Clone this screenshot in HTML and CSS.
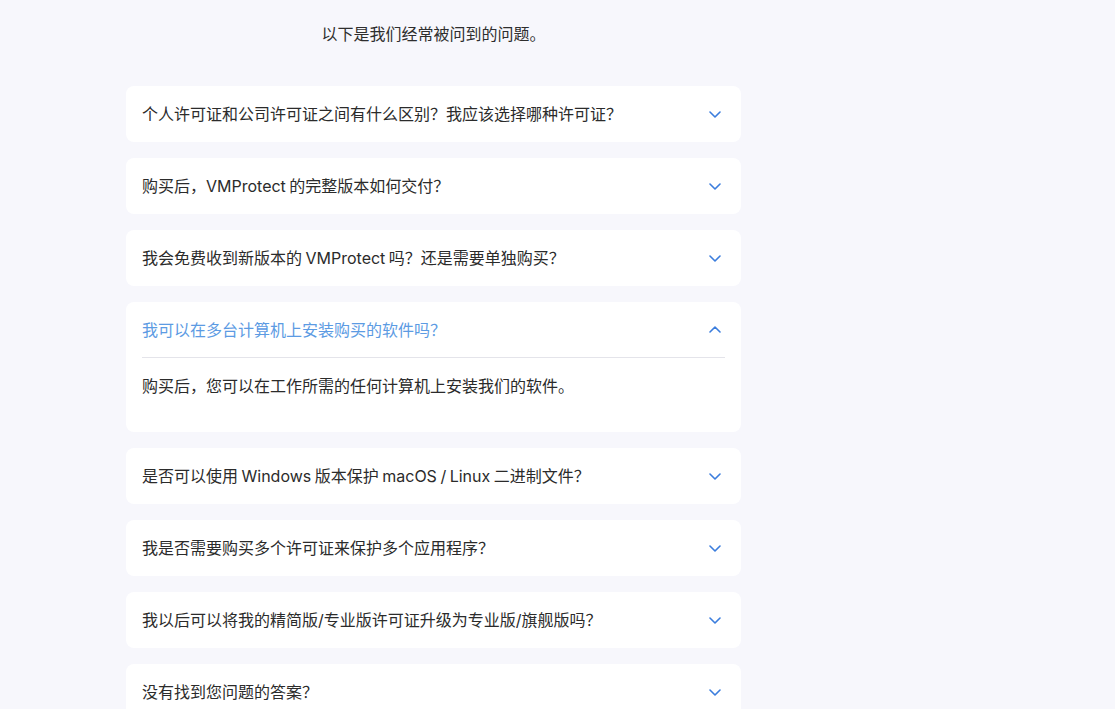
FILE: index.html
```html
<!DOCTYPE html>
<html lang="zh-CN">
<head>
<meta charset="utf-8">
<title>FAQ</title>
<link rel="stylesheet" href="styles.css">
</head>
<body>
<div class="faq">
  <p class="intro">以下是我们经常被问到的问题。</p>
  <div class="list">
    <div class="item">
      <div class="q"><span>个人许可证和公司许可证之间有什么区别？我应该选择哪种许可证？</span><svg class="chev" viewBox="0 0 12 7"><path d="M1 1l5 5 5-5"/></svg></div>
    </div>
    <div class="item">
      <div class="q"><span>购买后，VMProtect 的完整版本如何交付？</span><svg class="chev" viewBox="0 0 12 7"><path d="M1 1l5 5 5-5"/></svg></div>
    </div>
    <div class="item">
      <div class="q"><span>我会免费收到新版本的 VMProtect 吗？还是需要单独购买？</span><svg class="chev" viewBox="0 0 12 7"><path d="M1 1l5 5 5-5"/></svg></div>
    </div>
    <div class="item open">
      <div class="q"><span>我可以在多台计算机上安装购买的软件吗？</span><svg class="chev" viewBox="0 0 12 7"><path d="M1 6l5-5 5 5"/></svg></div>
      <div class="a">购买后，您可以在工作所需的任何计算机上安装我们的软件。</div>
    </div>
    <div class="item">
      <div class="q"><span>是否可以使用 Windows 版本保护 macOS / Linux 二进制文件？</span><svg class="chev" viewBox="0 0 12 7"><path d="M1 1l5 5 5-5"/></svg></div>
    </div>
    <div class="item">
      <div class="q"><span>我是否需要购买多个许可证来保护多个应用程序？</span><svg class="chev" viewBox="0 0 12 7"><path d="M1 1l5 5 5-5"/></svg></div>
    </div>
    <div class="item">
      <div class="q"><span>我以后可以将我的精简版/专业版许可证升级为专业版/旗舰版吗？</span><svg class="chev" viewBox="0 0 12 7"><path d="M1 1l5 5 5-5"/></svg></div>
    </div>
    <div class="item">
      <div class="q"><span>没有找到您问题的答案？</span><svg class="chev" viewBox="0 0 12 7"><path d="M1 1l5 5 5-5"/></svg></div>
    </div>
  </div>
</div>
</body>
</html>
```

FILE: styles.css
```css
* { box-sizing: border-box; }
html, body { margin: 0; padding: 0; }
body {
  background: #f7f7fc;
  font-family: Inter, "Noto Sans CJK SC", sans-serif;
  color: #2b2b2b;
  font-size: 16px;
}
.faq {
  width: 615px;
  margin-left: 126px;
  padding-top: 22px;
}
.intro {
  margin: 0 0 40px;
  text-align: center;
  line-height: 24px;
  color: #2e2e2e;
}
.list {
  display: flex;
  flex-direction: column;
  gap: 16px;
}
.item {
  background: #fff;
  border-radius: 8px;
  padding: 0 16px;
}
.q {
  height: 56px;
  display: flex;
  align-items: center;
  justify-content: space-between;
  line-height: 24px;
}
.q span { word-spacing: -1px; }
.chev {
  width: 12px;
  height: 7px;
  margin-right: 4px;
  fill: none;
  stroke: #3b7ddd;
  stroke-width: 1.6;
  stroke-linecap: round;
  stroke-linejoin: round;
}
.open .q {
  color: #5c9be3;
  border-bottom: 1px solid #e4e4ea;
}
.a {
  padding: 16px 0 34px;
  line-height: 24px;
  color: #2b2b2b;
}
```
